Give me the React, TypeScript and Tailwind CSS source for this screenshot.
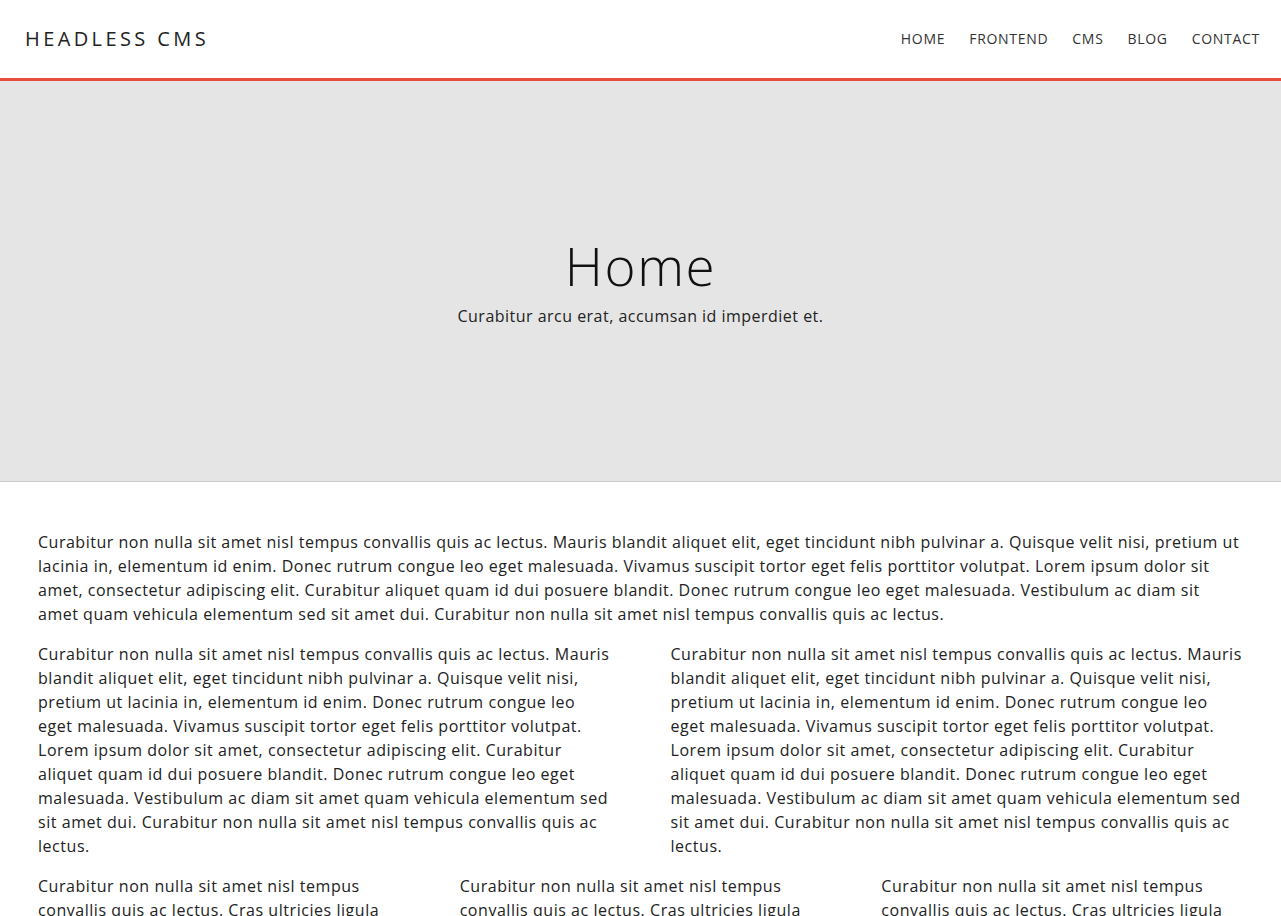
const para =
  'Curabitur non nulla sit amet nisl tempus convallis quis ac lectus. Mauris blandit aliquet elit, eget tincidunt nibh pulvinar a. Quisque velit nisi, pretium ut lacinia in, elementum id enim. Donec rutrum congue leo eget malesuada. Vivamus suscipit tortor eget felis porttitor volutpat. Lorem ipsum dolor sit amet, consectetur adipiscing elit. Curabitur aliquet quam id dui posuere blandit. Donec rutrum congue leo eget malesuada. Vestibulum ac diam sit amet quam vehicula elementum sed sit amet dui. Curabitur non nulla sit amet nisl tempus convallis quis ac lectus.'

const shortPara =
  'Curabitur non nulla sit amet nisl tempus convallis quis ac lectus. Cras ultricies ligula sed magna dictum porta. Pellentesque in ipsum id orci porta dapibus. Nulla quis lorem ut libero malesuada feugiat.'

const links = ['Home', 'Frontend', 'CMS', 'Blog', 'Contact']

export default function App() {
  return (
    <div className="min-h-screen bg-white text-[#222] font-['Open_Sans',sans-serif]">
      <header className="h-[81px] flex items-center justify-between pl-[25px] pr-[21px] border-b-[3px] border-[#e74c3c]">
        <a href="#" className="text-[20px] tracking-[0.17em] uppercase text-[#222]">
          Headless CMS
        </a>
        <nav className="flex gap-[24px] text-[14px] tracking-[0.05em] uppercase text-[#333] mb-[2px]">
          {links.map((l) => (
            <a key={l} href="#">
              {l}
            </a>
          ))}
        </nav>
      </header>

      <section className="h-[401px] bg-[#e5e5e5] border-b border-[#ccc] flex flex-col items-center justify-center">
        <h1 className="text-[53px] font-light leading-[64px] tracking-[0.03em] text-[#111]">Home</h1>
        <p className="text-[16px] tracking-[0.03em] mt-[6px]">Curabitur arcu erat, accumsan id imperdiet et.</p>
      </section>

      <main className="px-[38px] pt-[48px] text-[16px] leading-[24px] tracking-[0.034em]">
        <p className="mb-[16px] tracking-[0.032em]">{para}</p>
        <div className="grid grid-cols-2 gap-x-[60px] mb-[16px]">
          <p>{para}</p>
          <p>{para}</p>
        </div>
        <div className="grid grid-cols-3 gap-x-[60px]">
          <p>{shortPara}</p>
          <p>{shortPara}</p>
          <p>{shortPara}</p>
        </div>
      </main>
    </div>
  )
}
